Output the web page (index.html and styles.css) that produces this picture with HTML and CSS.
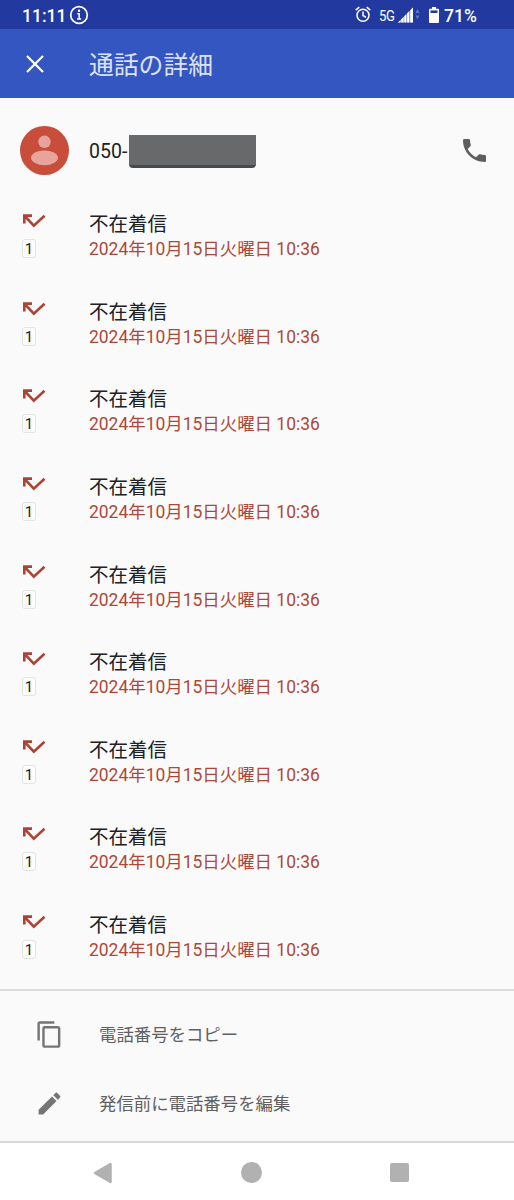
FILE: index.html
```html
<!DOCTYPE html>
<html lang="ja">
<head>
    <meta charset="UTF-8">
    <meta name="viewport" content="width=device-width, initial-scale=1.0">
    <title>通話の詳細</title>
    <link rel="stylesheet" href="styles.css">
</head>
<body>

<!-- Shared icon -->
<svg class="defs" width="0" height="0">
    <symbol id="missed" viewBox="0 0 23 14">
        <path d="M1.300 9.500V1.600H9M1.500 1.800L10.800 11.600L21.500 1.700" fill="none" stroke="#ad4334" stroke-width="2.600"/>
    </symbol>
</svg>

<div class="status-bar">
    <span class="clock">11:11</span>
    <svg class="info" width="20" height="20" viewBox="0 0 20 20">
        <circle cx="10" cy="10" r="8.300" fill="none" stroke="#fff" stroke-width="1.700"/>
        <path d="M8.300 8.700h1.900v5M8 14h4.200" fill="none" stroke="#fff" stroke-width="1.500"/>
        <circle cx="10" cy="5.700" r="1.200" fill="#fff"/>
    </svg>
    <svg class="alarm" width="16" height="17" viewBox="0 0 16 17">
        <g fill="none" stroke="#fff" stroke-width="1.500">
            <circle cx="8" cy="9.200" r="6"/>
            <path d="M.7 4.200L4.300 1.200M15.300 4.200L11.700 1.200M8 5.500v4l3 1.800"/>
        </g>
    </svg>
    <span class="network">5G</span>
    <svg class="signal" width="22" height="16" viewBox="0 0 22 16">
        <path d="M0 15.500L15 .5v15z" fill="#8290cb"/>
        <path d="M0 15.500h2.500v-2.500L0 15.500zM3.300 12.200l2.200-2.200v5.500H3.300zM6.300 9.200l2-2v8.300h-2zM9.200 6.300l2-2v11.200h-2zM12.300 3.200L15 .5v15h-2.700z" fill="#fff"/>
        <path d="M17.500 6l2-4 2 4zM17.500 8.500l2 4 2-4z" fill="#6377c3"/>
    </svg>
    <svg class="battery" width="10" height="16" viewBox="0 0 10 16">
        <path d="M3 0h4v1.700h2q1 0 1 1V15q0 1-1 1H1q-1 0-1-1V2.700q0-1 1-1h2z" fill="#fff"/>
        <path d="M1.500 3.400h7V6h-7z" fill="#2239a0"/>
    </svg>
    <span class="percent">71%</span>
</div>

<header>
    <svg width="18" height="18" viewBox="0 0 18 18">
        <path d="M1 1l16 16M17 1L1 17" stroke="#fff" stroke-width="2.200"/>
    </svg>
    <h1>通話の詳細</h1>
</header>

<div class="contact">
    <svg class="avatar" width="49" height="49" viewBox="0 0 49 49">
        <circle cx="24.500" cy="24.500" r="24.500" fill="#c84d3b"/>
        <circle cx="24.500" cy="15.800" r="6.200" fill="#e6a49c"/>
        <ellipse cx="24.500" cy="31.800" rx="13.500" ry="7.400" fill="#e6a49c"/>
    </svg>
    <span class="number">050-</span>
    <span class="mask"></span>
    <svg class="phone" width="23" height="23" viewBox="3 3 18 18">
        <path d="M6.620 10.790c1.440 2.830 3.760 5.140 6.590 6.590l2.200-2.200c.27-.27.67-.36 1.020-.24 1.120.37 2.330.57 3.570.57.55 0 1 .45 1 1V20c0 .55-.45 1-1 1-9.390 0-17-7.610-17-17 0-.55.45-1 1-1h3.500c.55 0 1 .45 1 1 0 1.250.2 2.450.57 3.570.11.35.03.74-.25 1.020l-2.200 2.200z" fill="#5d5e60"/>
    </svg>
</div>

<ul class="calls">
    <li>
        <div class="call-icons"><svg width="23" height="14"><use href="#missed"/></svg><span class="sim">1</span></div>
        <div class="call-text"><p class="type">不在着信</p><p class="date">2024年10月15日火曜日 10:36</p></div>
    </li>
    <li>
        <div class="call-icons"><svg width="23" height="14"><use href="#missed"/></svg><span class="sim">1</span></div>
        <div class="call-text"><p class="type">不在着信</p><p class="date">2024年10月15日火曜日 10:36</p></div>
    </li>
    <li>
        <div class="call-icons"><svg width="23" height="14"><use href="#missed"/></svg><span class="sim">1</span></div>
        <div class="call-text"><p class="type">不在着信</p><p class="date">2024年10月15日火曜日 10:36</p></div>
    </li>
    <li>
        <div class="call-icons"><svg width="23" height="14"><use href="#missed"/></svg><span class="sim">1</span></div>
        <div class="call-text"><p class="type">不在着信</p><p class="date">2024年10月15日火曜日 10:36</p></div>
    </li>
    <li>
        <div class="call-icons"><svg width="23" height="14"><use href="#missed"/></svg><span class="sim">1</span></div>
        <div class="call-text"><p class="type">不在着信</p><p class="date">2024年10月15日火曜日 10:36</p></div>
    </li>
    <li>
        <div class="call-icons"><svg width="23" height="14"><use href="#missed"/></svg><span class="sim">1</span></div>
        <div class="call-text"><p class="type">不在着信</p><p class="date">2024年10月15日火曜日 10:36</p></div>
    </li>
    <li>
        <div class="call-icons"><svg width="23" height="14"><use href="#missed"/></svg><span class="sim">1</span></div>
        <div class="call-text"><p class="type">不在着信</p><p class="date">2024年10月15日火曜日 10:36</p></div>
    </li>
    <li>
        <div class="call-icons"><svg width="23" height="14"><use href="#missed"/></svg><span class="sim">1</span></div>
        <div class="call-text"><p class="type">不在着信</p><p class="date">2024年10月15日火曜日 10:36</p></div>
    </li>
    <li>
        <div class="call-icons"><svg width="23" height="14"><use href="#missed"/></svg><span class="sim">1</span></div>
        <div class="call-text"><p class="type">不在着信</p><p class="date">2024年10月15日火曜日 10:36</p></div>
    </li>
</ul>

<div class="actions">
    <div class="action">
        <svg width="29" height="29" viewBox="0 0 24 24">
            <path d="M16 1H4c-1.100 0-2 .9-2 2v14h2V3h12V1zm3 4H8c-1.100 0-2 .9-2 2v14c0 1.100.9 2 2 2h11c1.100 0 2-.9 2-2V7c0-1.100-.9-2-2-2zm0 16H8V7h11v14z" fill="#757575"/>
        </svg>
        <span>電話番号をコピー</span>
    </div>
    <div class="action">
        <svg width="29" height="29" viewBox="0 0 24 24">
            <path d="M3 17.250V21h3.750L17.810 9.940l-3.750-3.750L3 17.250zM20.710 7.040c.39-.39.39-1.020 0-1.410l-2.340-2.340c-.39-.39-1.020-.39-1.410 0l-1.830 1.830 3.750 3.750 1.830-1.830z" fill="#757575"/>
        </svg>
        <span>発信前に電話番号を編集</span>
    </div>
</div>

<nav>
    <svg width="20" height="22" viewBox="0 0 20 22">
        <path d="M2 11L17.500 2v18z" fill="#b1b1b1" stroke="#b1b1b1" stroke-width="2.500" stroke-linejoin="round"/>
    </svg>
    <span class="home"></span>
    <span class="recent"></span>
</nav>

</body>
</html>
```

FILE: styles.css
```css
* {
    box-sizing: border-box;
}
body {
    font-family: Roboto, "Noto Sans CJK JP", sans-serif;
    margin: 0;
    height: 1200px;
    background-color: #fafafa;
    color: #202124;
    display: flex;
    flex-direction: column;
    overflow: hidden;
}
svg, span {
    display: block;
    flex-shrink: 0;
}
.defs {
    position: absolute;
}
.status-bar {
    height: 29px;
    padding-left: 22px;
    background-color: #2239a0;
    color: #fff;
    display: flex;
    align-items: center;
    line-height: 20px;
}
.clock, .network, .percent {
    padding-top: 2px;
}
.clock {
    width: 47px;
    font-size: 17.500px;
    font-weight: 500;
}
.alarm {
    margin-left: 266px;
}
.network {
    width: 19px;
    margin-left: 8px;
    font-size: 15px;
    letter-spacing: -0.4px;
    transform: scaleX(0.87);
    transform-origin: left;
}
.battery {
    margin-left: 9px;
}
.percent {
    margin-left: 5px;
    font-size: 17.500px;
    font-weight: 500;
}
header {
    height: 69px;
    padding-left: 26px;
    background-color: #3456c0;
    display: flex;
    align-items: center;
}
h1 {
    margin: 0 0 0 45px;
    padding-top: 4px;
    color: #dce3f8;
    font-size: 24.800px;
    font-weight: 400;
    line-height: 36px;
}
.contact {
    height: 103px;
    padding: 2px 28px 0 20px;
    display: flex;
    align-items: center;
}
.number {
    width: 40px;
    margin-left: 20px;
    padding-top: 2px;
    font-size: 19.500px;
}
.mask {
    width: 127px;
    height: 33px;
    margin-top: 2px;
    background-color: #67696a;
    border-bottom: 3px solid #48494d;
    border-radius: 0 0 4px 4px;
}
.phone {
    margin-left: auto;
}
.calls {
    list-style-type: none;
    margin: 0;
    padding: 0;
}
.calls li {
    height: 87.650px;
    padding: 11px 0 0 22px;
    display: flex;
}
.calls li:last-child {
    height: 86.800px;
}
.call-icons {
    width: 67px;
    padding-top: 2px;
}
.call-icons svg {
    margin-left: 1px;
}
.sim {
    width: 14px;
    height: 19px;
    margin-top: 11px;
    border: 1px solid #e2e3e5;
    border-radius: 3px;
    background-color: #fdfdfd;
    font-size: 15px;
    line-height: 18px;
    text-align: center;
}
.type, .date {
    margin: 0;
    white-space: nowrap;
}
.type {
    font-size: 19.500px;
    line-height: 26px;
}
.date {
    color: #ad4839;
    font-size: 17.450px;
    line-height: 23px;
}
.actions {
    height: 154px;
    padding-top: 9px;
    border-top: 2px solid #dcdcdc;
    border-bottom: 2px solid #d8d8d8;
}
.action {
    height: 69px;
    padding-left: 35px;
    display: flex;
    align-items: center;
    color: #5f6062;
    font-size: 17.400px;
}
.action span {
    margin-left: 35px;
    padding-bottom: 2px;
}
nav {
    flex: 1;
    padding: 3px 0 0 93px;
    background-color: #fff;
    display: flex;
    align-items: center;
}
.home {
    width: 21px;
    height: 21px;
    margin-left: 128px;
    border-radius: 50%;
    background-color: #b1b1b1;
}
.recent {
    width: 19px;
    height: 19px;
    margin-left: 128px;
    border-radius: 2px;
    background-color: #b1b1b1;
}
```
